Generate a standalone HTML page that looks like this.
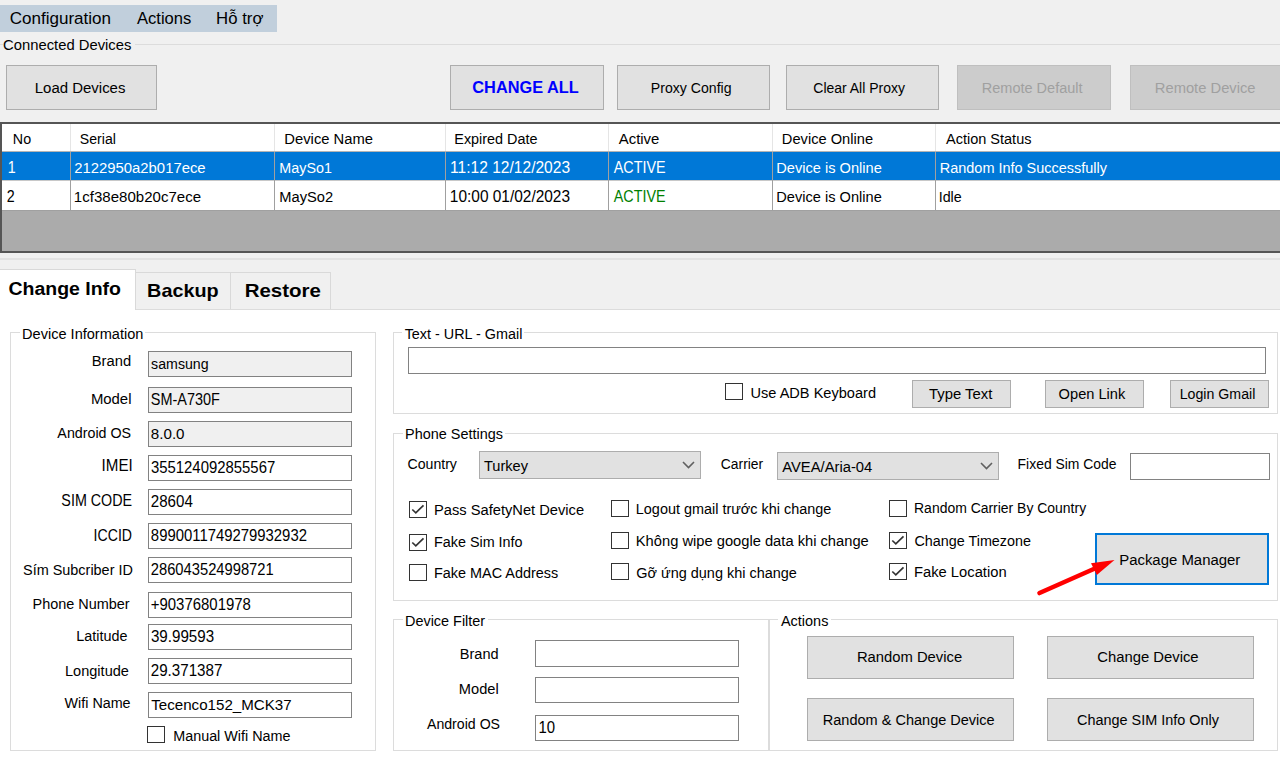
<!DOCTYPE html>
<html><head><meta charset="utf-8">
<style>
html,body{margin:0;padding:0;}
body{width:1280px;height:767px;overflow:hidden;position:relative;background:#f0f0f0;font-family:"Liberation Sans", sans-serif;color:#000;}
.t{position:absolute;white-space:nowrap;line-height:1;}
</style></head><body>
<div style="position:absolute;left:0px;top:5px;width:277px;height:27px;background:#c1cfdc;"></div>
<div style="position:absolute;left:135px;top:44px;width:1145px;height:1px;background:#dcdcdc;"></div>
<div style="position:absolute;left:0px;top:44px;width:3px;height:1px;background:#dcdcdc;"></div>
<div style="position:absolute;left:6px;top:65px;width:151px;height:45px;box-sizing:border-box;background:#e1e1e1;border:1px solid #adadad;"></div>
<div style="position:absolute;left:450px;top:65px;width:154px;height:45px;box-sizing:border-box;background:#e1e1e1;border:1px solid #adadad;"></div>
<div style="position:absolute;left:617px;top:65px;width:153px;height:45px;box-sizing:border-box;background:#e1e1e1;border:1px solid #adadad;"></div>
<div style="position:absolute;left:786px;top:65px;width:153px;height:45px;box-sizing:border-box;background:#e1e1e1;border:1px solid #adadad;"></div>
<div style="position:absolute;left:957px;top:65px;width:154px;height:45px;box-sizing:border-box;background:#cccccc;border:1px solid #bfbfbf;"></div>
<div style="position:absolute;left:1130px;top:65px;width:154px;height:45px;box-sizing:border-box;background:#cccccc;border:1px solid #bfbfbf;"></div>
<div style="position:absolute;left:0px;top:122px;width:1282px;height:131px;box-sizing:border-box;border:2px solid #555;background:#ababab;"></div>
<div style="position:absolute;left:2px;top:124px;width:1278px;height:27px;background:#fff;"></div>
<div style="position:absolute;left:2px;top:151px;width:1278px;height:1px;background:#b4b4b4;"></div>
<div style="position:absolute;left:2px;top:152px;width:1278px;height:28px;background:#0078d7;"></div>
<div style="position:absolute;left:2px;top:180px;width:1278px;height:1px;background:#c8c8c8;"></div>
<div style="position:absolute;left:2px;top:181px;width:1278px;height:29px;background:#fff;"></div>
<div style="position:absolute;left:2px;top:210px;width:1278px;height:1px;background:#a0a0a0;"></div>
<div style="position:absolute;left:70px;top:124px;width:1px;height:27px;background:#e5e5e5;"></div>
<div style="position:absolute;left:70px;top:152px;width:1px;height:59px;background:#a0a0a0;"></div>
<div style="position:absolute;left:274px;top:124px;width:1px;height:27px;background:#e5e5e5;"></div>
<div style="position:absolute;left:274px;top:152px;width:1px;height:59px;background:#a0a0a0;"></div>
<div style="position:absolute;left:445px;top:124px;width:1px;height:27px;background:#e5e5e5;"></div>
<div style="position:absolute;left:445px;top:152px;width:1px;height:59px;background:#a0a0a0;"></div>
<div style="position:absolute;left:608px;top:124px;width:1px;height:27px;background:#e5e5e5;"></div>
<div style="position:absolute;left:608px;top:152px;width:1px;height:59px;background:#a0a0a0;"></div>
<div style="position:absolute;left:772px;top:124px;width:1px;height:27px;background:#e5e5e5;"></div>
<div style="position:absolute;left:772px;top:152px;width:1px;height:59px;background:#a0a0a0;"></div>
<div style="position:absolute;left:935px;top:124px;width:1px;height:27px;background:#e5e5e5;"></div>
<div style="position:absolute;left:935px;top:152px;width:1px;height:59px;background:#a0a0a0;"></div>
<div style="position:absolute;left:0px;top:258px;width:1280px;height:2px;background:#e2e2e2;"></div>
<div style="position:absolute;left:0px;top:309px;width:1280px;height:458px;background:#fff;"></div>
<div style="position:absolute;left:0px;top:309px;width:1280px;height:1px;background:#dcdcdc;"></div>
<div style="position:absolute;left:135px;top:272px;width:96px;height:37px;box-sizing:border-box;border:1px solid #d9d9d9;border-bottom:none;background:#f0f0f0;"></div>
<div style="position:absolute;left:230px;top:272px;width:101px;height:37px;box-sizing:border-box;border:1px solid #d9d9d9;border-bottom:none;background:#f0f0f0;"></div>
<div style="position:absolute;left:0px;top:269px;width:136px;height:41px;box-sizing:border-box;border:1px solid #d9d9d9;border-bottom:none;border-left:none;background:#fff;"></div>
<div style="position:absolute;left:10px;top:332px;width:366px;height:419px;box-sizing:border-box;border:1px solid #dcdcdc;"></div>
<div style="position:absolute;left:20px;top:331px;width:125px;height:3px;background:#fff;"></div>
<div style="position:absolute;left:148px;top:351px;width:204px;height:26px;box-sizing:border-box;background:#f0f0f0;border:1px solid #828282;"></div>
<div style="position:absolute;left:148px;top:387px;width:204px;height:26px;box-sizing:border-box;background:#f0f0f0;border:1px solid #828282;"></div>
<div style="position:absolute;left:148px;top:421px;width:204px;height:26px;box-sizing:border-box;background:#f0f0f0;border:1px solid #828282;"></div>
<div style="position:absolute;left:148px;top:455px;width:204px;height:26px;box-sizing:border-box;background:#fff;border:1px solid #828282;"></div>
<div style="position:absolute;left:148px;top:489px;width:204px;height:26px;box-sizing:border-box;background:#fff;border:1px solid #828282;"></div>
<div style="position:absolute;left:148px;top:523px;width:204px;height:26px;box-sizing:border-box;background:#fff;border:1px solid #828282;"></div>
<div style="position:absolute;left:148px;top:557px;width:204px;height:26px;box-sizing:border-box;background:#fff;border:1px solid #828282;"></div>
<div style="position:absolute;left:148px;top:592px;width:204px;height:26px;box-sizing:border-box;background:#fff;border:1px solid #828282;"></div>
<div style="position:absolute;left:148px;top:624px;width:204px;height:26px;box-sizing:border-box;background:#fff;border:1px solid #828282;"></div>
<div style="position:absolute;left:148px;top:658px;width:204px;height:26px;box-sizing:border-box;background:#fff;border:1px solid #828282;"></div>
<div style="position:absolute;left:148px;top:692px;width:204px;height:26px;box-sizing:border-box;background:#fff;border:1px solid #828282;"></div>
<div style="position:absolute;left:147px;top:726px;width:18px;height:17px;box-sizing:border-box;border:1px solid #333;background:#fff;"></div>
<div style="position:absolute;left:393px;top:332px;width:885px;height:82px;box-sizing:border-box;border:1px solid #dcdcdc;"></div>
<div style="position:absolute;left:402px;top:331px;width:122px;height:3px;background:#fff;"></div>
<div style="position:absolute;left:408px;top:347px;width:858px;height:27px;box-sizing:border-box;background:#fff;border:1px solid #828282;"></div>
<div style="position:absolute;left:725px;top:383px;width:18px;height:17px;box-sizing:border-box;border:1px solid #333;background:#fff;"></div>
<div style="position:absolute;left:912px;top:380px;width:99px;height:28px;box-sizing:border-box;background:#e1e1e1;border:1px solid #adadad;"></div>
<div style="position:absolute;left:1045px;top:380px;width:99px;height:28px;box-sizing:border-box;background:#e1e1e1;border:1px solid #adadad;"></div>
<div style="position:absolute;left:1170px;top:380px;width:99px;height:28px;box-sizing:border-box;background:#e1e1e1;border:1px solid #adadad;"></div>
<div style="position:absolute;left:393px;top:433px;width:885px;height:168px;box-sizing:border-box;border:1px solid #dcdcdc;"></div>
<div style="position:absolute;left:403px;top:432px;width:102px;height:3px;background:#fff;"></div>
<div style="position:absolute;left:479px;top:451px;width:222px;height:28px;box-sizing:border-box;background:#e1e1e1;border:1px solid #adadad;"></div>
<svg style="position:absolute;left:681px;top:459px" width="15" height="11" viewBox="0 0 15 11"><polyline points="2,3 7.5,8.5 13,3" fill="none" stroke="#606060" stroke-width="1.6"/></svg>
<div style="position:absolute;left:777px;top:452px;width:222px;height:28px;box-sizing:border-box;background:#e1e1e1;border:1px solid #adadad;"></div>
<svg style="position:absolute;left:979px;top:460px" width="15" height="11" viewBox="0 0 15 11"><polyline points="2,3 7.5,8.5 13,3" fill="none" stroke="#606060" stroke-width="1.6"/></svg>
<div style="position:absolute;left:1130px;top:453px;width:140px;height:27px;box-sizing:border-box;background:#fff;border:1px solid #828282;"></div>
<div style="position:absolute;left:409px;top:501px;width:18px;height:17px;box-sizing:border-box;border:1px solid #333;background:#fff;"><svg width="16" height="16" style="position:absolute;left:0;top:0" viewBox="0 0 16 16"><polyline points="2.3,7.5 5.8,10.8 13.5,3.3" fill="none" stroke="#333" stroke-width="1.7"/></svg></div>
<div style="position:absolute;left:409px;top:534px;width:18px;height:17px;box-sizing:border-box;border:1px solid #333;background:#fff;"><svg width="16" height="16" style="position:absolute;left:0;top:0" viewBox="0 0 16 16"><polyline points="2.3,7.5 5.8,10.8 13.5,3.3" fill="none" stroke="#333" stroke-width="1.7"/></svg></div>
<div style="position:absolute;left:409px;top:564px;width:18px;height:17px;box-sizing:border-box;border:1px solid #333;background:#fff;"></div>
<div style="position:absolute;left:611px;top:500px;width:18px;height:17px;box-sizing:border-box;border:1px solid #333;background:#fff;"></div>
<div style="position:absolute;left:611px;top:532px;width:18px;height:17px;box-sizing:border-box;border:1px solid #333;background:#fff;"></div>
<div style="position:absolute;left:611px;top:563px;width:18px;height:17px;box-sizing:border-box;border:1px solid #333;background:#fff;"></div>
<div style="position:absolute;left:889px;top:500px;width:18px;height:17px;box-sizing:border-box;border:1px solid #333;background:#fff;"></div>
<div style="position:absolute;left:889px;top:532px;width:18px;height:17px;box-sizing:border-box;border:1px solid #333;background:#fff;"><svg width="16" height="16" style="position:absolute;left:0;top:0" viewBox="0 0 16 16"><polyline points="2.3,7.5 5.8,10.8 13.5,3.3" fill="none" stroke="#333" stroke-width="1.7"/></svg></div>
<div style="position:absolute;left:889px;top:563px;width:18px;height:17px;box-sizing:border-box;border:1px solid #333;background:#fff;"><svg width="16" height="16" style="position:absolute;left:0;top:0" viewBox="0 0 16 16"><polyline points="2.3,7.5 5.8,10.8 13.5,3.3" fill="none" stroke="#333" stroke-width="1.7"/></svg></div>
<div style="position:absolute;left:1095px;top:533px;width:174px;height:52px;box-sizing:border-box;background:#e1e1e1;border:2px solid #0078d7;"></div>
<svg style="position:absolute;left:1020px;top:540px" width="110" height="70" viewBox="1020 540 110 70"><line x1="1039.5" y1="593" x2="1096" y2="568" stroke="#ff0000" stroke-width="4.6" stroke-linecap="round"/><polygon points="1114.5,560 1091,563.2 1096.8,575" fill="#ff0000"/></svg>
<div style="position:absolute;left:393px;top:619px;width:376px;height:132px;box-sizing:border-box;border:1px solid #dcdcdc;"></div>
<div style="position:absolute;left:403px;top:618px;width:85px;height:3px;background:#fff;"></div>
<div style="position:absolute;left:535px;top:640px;width:204px;height:27px;box-sizing:border-box;background:#fff;border:1px solid #828282;"></div>
<div style="position:absolute;left:535px;top:677px;width:204px;height:26px;box-sizing:border-box;background:#fff;border:1px solid #828282;"></div>
<div style="position:absolute;left:535px;top:715px;width:204px;height:26px;box-sizing:border-box;background:#fff;border:1px solid #828282;"></div>
<div style="position:absolute;left:769px;top:619px;width:509px;height:132px;box-sizing:border-box;border:1px solid #dcdcdc;"></div>
<div style="position:absolute;left:778px;top:618px;width:53px;height:3px;background:#fff;"></div>
<div style="position:absolute;left:807px;top:636px;width:207px;height:43px;box-sizing:border-box;background:#e1e1e1;border:1px solid #adadad;"></div>
<div style="position:absolute;left:1047px;top:636px;width:207px;height:43px;box-sizing:border-box;background:#e1e1e1;border:1px solid #adadad;"></div>
<div style="position:absolute;left:807px;top:698px;width:207px;height:43px;box-sizing:border-box;background:#e1e1e1;border:1px solid #adadad;"></div>
<div style="position:absolute;left:1047px;top:698px;width:207px;height:43px;box-sizing:border-box;background:#e1e1e1;border:1px solid #adadad;"></div>
<svg width="1280" height="767" style="position:absolute;left:0;top:0" font-family='"Liberation Sans", sans-serif' fill="#000">
<text transform="matrix(1.0336 0 0 1 9.65 24.00)" font-size="16.500">Configuration</text>
<text transform="matrix(1.0051 0 0 1 136.97 24.00)" font-size="16.500">Actions</text>
<text transform="matrix(1.0168 0 0 1 216.12 24.00)" font-size="16.500">Hỗ trợ</text>
<text transform="matrix(1.0365 0 0 1.04 3.01 49.50)" font-size="14.300">Connected Devices</text>
<text transform="matrix(1.0476 0 0 1.04 34.77 93.00)" font-size="14.300">Load Devices</text>
<text transform="matrix(1.0218 0 0 1 472.33 93.00)" font-size="16.000" font-weight="bold" fill="#0000ff">CHANGE ALL</text>
<text transform="matrix(0.9866 0 0 1.04 650.84 93.00)" font-size="14.300">Proxy Config</text>
<text transform="matrix(0.9781 0 0 1.04 813.30 93.00)" font-size="14.300">Clear All Proxy</text>
<text transform="matrix(1.0144 0 0 1.04 981.81 93.00)" font-size="14.300" fill="#a0a0a0">Remote Default</text>
<text transform="matrix(1.0318 0 0 1.04 1154.79 93.00)" font-size="14.300" fill="#a0a0a0">Remote Device</text>
<text transform="matrix(1.0000 0 0 1.04 12.83 143.50)" font-size="14.300">No</text>
<text transform="matrix(0.9863 0 0 1.04 79.87 143.50)" font-size="14.300">Serial</text>
<text transform="matrix(1.0354 0 0 1.04 284.29 143.50)" font-size="14.300">Device Name</text>
<text transform="matrix(1.0078 0 0 1.04 454.32 143.50)" font-size="14.300">Expired Date</text>
<text transform="matrix(1.0449 0 0 1.04 618.72 143.50)" font-size="14.300">Active</text>
<text transform="matrix(1.0262 0 0 1.04 781.80 143.50)" font-size="14.300">Device Online</text>
<text transform="matrix(1.0154 0 0 1.04 945.97 143.50)" font-size="14.300">Action Status</text>
<text transform="matrix(1.0000 0 0 1.1 7.66 172.60)" font-size="14.300" fill="#ffffff">1</text>
<text transform="matrix(1.0392 0 0 1.04 74.26 172.60)" font-size="14.300" fill="#ffffff">2122950a2b017ece</text>
<text transform="matrix(1.0031 0 0 1.04 279.32 172.60)" font-size="14.300" fill="#ffffff">MaySo1</text>
<text transform="matrix(1.0892 0 0 1.1 450.07 172.60)" font-size="14.300" fill="#ffffff">11:12 12/12/2023</text>
<text transform="matrix(1.0045 0 0 1.1 613.72 172.60)" font-size="14.300" fill="#ffffff">ACTIVE</text>
<text transform="matrix(1.0220 0 0 1.04 776.30 172.60)" font-size="14.300" fill="#ffffff">Device is Online</text>
<text transform="matrix(1.0114 0 0 1.04 939.81 172.60)" font-size="14.300" fill="#ffffff">Random Info Successfully</text>
<text transform="matrix(1.0000 0 0 1.1 6.79 202.40)" font-size="14.300">2</text>
<text transform="matrix(1.0533 0 0 1.04 73.86 202.40)" font-size="14.300">1cf38e80b20c7ece</text>
<text transform="matrix(1.0284 0 0 1.04 279.29 202.40)" font-size="14.300">MaySo2</text>
<text transform="matrix(1.0810 0 0 1.1 449.83 202.40)" font-size="14.300">10:00 01/02/2023</text>
<text transform="matrix(1.0045 0 0 1.1 613.72 202.40)" font-size="14.300" fill="#008000">ACTIVE</text>
<text transform="matrix(1.0220 0 0 1.04 776.30 202.40)" font-size="14.300">Device is Online</text>
<text transform="matrix(1.0000 0 0 1.04 938.68 202.40)" font-size="14.300">Idle</text>
<text transform="matrix(1.0253 0 0 1 8.50 295.00)" font-size="19.000" font-weight="bold">Change Info</text>
<text transform="matrix(1.0421 0 0 1 147.09 297.20)" font-size="19.000" font-weight="bold">Backup</text>
<text transform="matrix(1.0791 0 0 1 244.65 297.20)" font-size="19.000" font-weight="bold">Restore</text>
<text transform="matrix(1.0177 0 0 1.04 22.11 338.50)" font-size="14.300">Device Information</text>
<text transform="matrix(0.9927 0 0 1.04 151.12 368.80)" font-size="14.300">samsung</text>
<text transform="matrix(1.0315 0 0 1.04 91.79 366.00)" font-size="14.300">Brand</text>
<text transform="matrix(1.0113 0 0 1.1 150.85 404.80)" font-size="14.300">SM-A730F</text>
<text transform="matrix(1.0428 0 0 1.04 90.88 403.70)" font-size="14.300">Model</text>
<text transform="matrix(1.0605 0 0 1.04 150.85 438.80)" font-size="14.300">8.0.0</text>
<text transform="matrix(0.9980 0 0 1.04 57.37 438.00)" font-size="14.300">Android OS</text>
<text transform="matrix(1.0429 0 0 1.1 150.93 472.80)" font-size="14.300">355124092855567</text>
<text transform="matrix(1.0609 0 0 1.1 101.60 471.30)" font-size="14.300">IMEI</text>
<text transform="matrix(1.0585 0 0 1.1 150.74 506.80)" font-size="14.300">28604</text>
<text transform="matrix(1.0019 0 0 1.1 61.36 506.30)" font-size="14.300">SIM CODE</text>
<text transform="matrix(1.0416 0 0 1.1 150.86 540.80)" font-size="14.300">8990011749279932932</text>
<text transform="matrix(0.9882 0 0 1.1 93.60 541.10)" font-size="14.300">ICCID</text>
<text transform="matrix(1.0315 0 0 1.1 150.76 574.80)" font-size="14.300">286043524998721</text>
<text transform="matrix(1.0098 0 0 1.04 23.05 574.90)" font-size="14.300">Sím Subcriber ID</text>
<text transform="matrix(1.0451 0 0 1.1 150.78 609.80)" font-size="14.300">+90376801978</text>
<text transform="matrix(1.0108 0 0 1.04 32.51 609.00)" font-size="14.300">Phone Number</text>
<text transform="matrix(1.0601 0 0 1.1 150.92 641.80)" font-size="14.300">39.99593</text>
<text transform="matrix(1.0045 0 0 1.04 76.32 641.30)" font-size="14.300">Latitude</text>
<text transform="matrix(1.0595 0 0 1.1 150.74 675.80)" font-size="14.300">29.371387</text>
<text transform="matrix(1.0177 0 0 1.04 65.01 676.00)" font-size="14.300">Longitude</text>
<text transform="matrix(1.0590 0 0 1.04 151.17 709.80)" font-size="14.300">Tecenco152_MCK37</text>
<text transform="matrix(1.0023 0 0 1.04 64.54 708.40)" font-size="14.300">Wifi Name</text>
<text transform="matrix(1.0051 0 0 1.04 173.22 741.40)" font-size="14.300">Manual Wifi Name</text>
<text transform="matrix(1.0060 0 0 1.04 404.68 338.80)" font-size="14.300">Text - URL - Gmail</text>
<text transform="matrix(1.0190 0 0 1.04 750.48 398.00)" font-size="14.300">Use ADB Keyboard</text>
<text transform="matrix(1.0408 0 0 1.04 928.97 399.10)" font-size="14.300">Type Text</text>
<text transform="matrix(1.0240 0 0 1.04 1058.61 399.10)" font-size="14.300">Open Link</text>
<text transform="matrix(0.9907 0 0 1.04 1179.74 399.10)" font-size="14.300">Login Gmail</text>
<text transform="matrix(1.0104 0 0 1.04 405.02 439.20)" font-size="14.300">Phone Settings</text>
<text transform="matrix(0.9874 0 0 1.04 407.49 469.00)" font-size="14.300">Country</text>
<text transform="matrix(1.0227 0 0 1.04 483.88 470.70)" font-size="14.300">Turkey</text>
<text transform="matrix(0.9706 0 0 1.04 720.81 468.90)" font-size="14.300">Carrier</text>
<text transform="matrix(1.0344 0 0 1.04 782.17 471.80)" font-size="14.300">AVEA/Aria-04</text>
<text transform="matrix(0.9732 0 0 1.04 1017.61 468.90)" font-size="14.300">Fixed Sim Code</text>
<text transform="matrix(1.0275 0 0 1.04 434.00 515.30)" font-size="14.300">Pass SafetyNet Device</text>
<text transform="matrix(1.0040 0 0 1.04 434.02 547.40)" font-size="14.300">Fake Sim Info</text>
<text transform="matrix(1.0091 0 0 1.04 434.02 577.50)" font-size="14.300">Fake MAC Address</text>
<text transform="matrix(1.0092 0 0 1.04 635.82 513.70)" font-size="14.300">Logout gmail trước khi change</text>
<text transform="matrix(1.0289 0 0 1.04 635.79 546.00)" font-size="14.300">Không wipe google data khi change</text>
<text transform="matrix(1.0119 0 0 1.04 636.28 577.50)" font-size="14.300">Gỡ ứng dụng khi change</text>
<text transform="matrix(0.9765 0 0 1.04 914.05 513.00)" font-size="14.300">Random Carrier By Country</text>
<text transform="matrix(1.0042 0 0 1.04 914.48 545.70)" font-size="14.300">Change Timezone</text>
<text transform="matrix(1.0325 0 0 1.04 913.99 577.20)" font-size="14.300">Fake Location</text>
<text transform="matrix(1.0449 0 0 1.04 1119.17 564.80)" font-size="14.300">Package Manager</text>
<text transform="matrix(1.0094 0 0 1.04 405.02 625.90)" font-size="14.300">Device Filter</text>
<text transform="matrix(1.0176 0 0 1.04 459.81 658.50)" font-size="14.300">Brand</text>
<text transform="matrix(1.0238 0 0 1.04 458.80 693.80)" font-size="14.300">Model</text>
<text transform="matrix(0.9898 0 0 1.04 426.97 728.90)" font-size="14.300">Android OS</text>
<text transform="matrix(1.0440 0 0 1.1 538.47 733.30)" font-size="14.300">10</text>
<text transform="matrix(1.0119 0 0 1.04 780.97 626.00)" font-size="14.300">Actions</text>
<text transform="matrix(1.0357 0 0 1.04 856.89 662.30)" font-size="14.300">Random Device</text>
<text transform="matrix(1.0371 0 0 1.04 1097.26 662.30)" font-size="14.300">Change Device</text>
<text transform="matrix(1.0161 0 0 1.04 822.81 724.90)" font-size="14.300">Random &amp; Change Device</text>
<text transform="matrix(1.0097 0 0 1.04 1076.98 724.90)" font-size="14.300">Change SIM Info Only</text>
</svg>
</body></html>
